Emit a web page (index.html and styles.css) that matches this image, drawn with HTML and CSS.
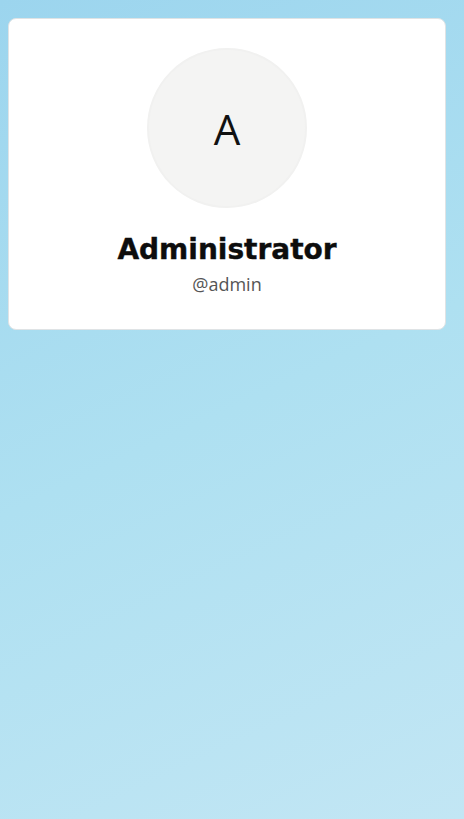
FILE: index.html
```html
<!DOCTYPE html>
<html>
<head>
<meta charset="utf-8">
<link rel="stylesheet" href="styles.css">
</head>
<body>
<div class="page">
  <div class="card">
    <div class="avatar">A</div>
    <h1 class="name">Administrator</h1>
    <div class="handle">@admin</div>
  </div>
</div>
</body>
</html>
```
FILE: styles.css
```css
html, body {
  margin: 0;
  padding: 0;
  height: 100%;
}
body {
  background: linear-gradient(155deg, #9cd5ee 0%, #aee0f1 50%, #c2e6f4 100%);
  font-family: "Open Sans", sans-serif;
}
.page {
  padding: 18px 18px 0 8px;
}
.card {
  background: #fff;
  border: 1px solid #dfe3e5;
  border-radius: 8px;
  display: flex;
  flex-direction: column;
  align-items: center;
  padding: 29px 0 33px;
}
.avatar {
  width: 156px;
  height: 156px;
  border-radius: 50%;
  background: #f4f4f3;
  border: 2px solid #f1f1f0;
  display: flex;
  align-items: center;
  justify-content: center;
  font-family: "Open Sans", sans-serif;
  font-size: 42px;
  color: #111;
  font-weight: 400;
}
.name {
  margin: 24px 0 0;
  font-family: "DejaVu Sans", sans-serif;
  font-weight: 700;
  font-size: 28px;
  line-height: 36px;
  color: #0d0d0d;
  -webkit-text-stroke: 0.4px #0d0d0d;
}
.handle {
  margin-top: 4px;
  font-size: 18px;
  line-height: 24px;
  color: #555;
}
```
